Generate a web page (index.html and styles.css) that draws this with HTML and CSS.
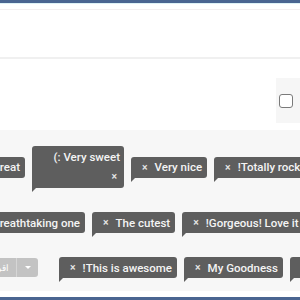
FILE: index.html
```html
<!DOCTYPE html>
<html lang="ar">
<head>
  <meta charset="UTF-8" />
  <meta name="viewport" content="width=device-width, initial-scale=1" />
  <title>Tags</title>
  <link rel="stylesheet" href="styles.css">
</head>
<body>

<div class="topbar"></div>
<div class="subbar"></div>
<div class="header"></div>

<!-- options panel -->
<div class="panel">
  <div class="check-box">
    <span class="checkbox"></span>
  </div>
</div>

<!-- tags -->
<div class="tags">
  <div class="row row-tall">
    <div class="cut" style="width: 25px">
      <span class="tag"><span class="x">×</span><span class="label" dir="rtl">Looks great</span></span>
    </div>
    <span class="tag tag-wrap"><span class="label" dir="rtl">Very sweet :)</span><span class="x">×</span></span>
    <span class="tag"><span class="x">×</span><span class="label" dir="rtl">Very nice</span></span>
    <span class="tag"><span class="x">×</span><span class="label" dir="rtl">Totally rocks!</span></span>
  </div>

  <div class="row">
    <div class="cut" style="width: 85px">
      <span class="tag"><span class="x">×</span><span class="label" dir="rtl">Breathtaking one</span></span>
    </div>
    <span class="tag"><span class="x">×</span><span class="label" dir="rtl">The cutest</span></span>
    <span class="tag"><span class="x">×</span><span class="label" dir="rtl">Gorgeous! Love it!</span></span>
  </div>

  <div class="row">
    <div class="cut cut-wide" style="width: 38px">
      <div class="btn-group">
        <span class="btn-main">اقرأ المزيد</span>
        <span class="btn-caret"></span>
      </div>
    </div>
    <span class="tag"><span class="x">×</span><span class="label" dir="rtl">This is awesome!</span></span>
    <span class="tag"><span class="x">×</span><span class="label" dir="rtl">My Goodness</span></span>
    <span class="tag"><span class="x">×</span><span class="label" dir="rtl">Wonderful</span></span>
  </div>
</div>

<div class="footer-gap"></div>
<div class="bottombar"></div>

</body>
</html>
```

FILE: styles.css
```css
* {
  margin: 0;
  padding: 0;
  box-sizing: border-box;
}

body {
  font-family: Roboto, 'Noto Sans', sans-serif;
  background: #fff;
  width: 300px;
  height: 300px;
  overflow: hidden;
}

.topbar {
  height: 4px;
  background: #4a6591;
  border-bottom: 1px solid #def2f6;
}

.subbar {
  height: 6px;
  border-bottom: 1px solid #f3eff0;
}

.header {
  height: 49px;
  border-bottom: 2px solid #f0f0f0;
}

.panel {
  height: 71px;
  display: flex;
  justify-content: flex-end;
}

.check-box {
  margin-top: 19px;
  width: 24px;
  height: 45px;
  background: #f6f6f6;
  padding: 16px 0 0 3px;
}

.checkbox {
  display: block;
  width: 14px;
  height: 14px;
  border: 1.5px solid #7a7a7a;
  border-radius: 3px;
  background: #fff;
}

/* tag list */
.tags {
  background: #f7f7f7;
  height: 161px;
  padding-top: 16px;
  display: flex;
  flex-direction: column;
  gap: 24px;
  overflow: hidden;
}

.row {
  display: flex;
  align-items: center;
  gap: 7px;
  height: 21px;
  white-space: nowrap;
}

.row-tall {
  height: 42px;
}

.cut {
  flex-shrink: 0;
  display: flex;
  justify-content: flex-end;
}

.cut-wide {
  margin-right: 14px;
}

.tag {
  position: relative;
  flex-shrink: 0;
  display: inline-flex;
  align-items: center;
  height: 21px;
  padding: 0 5px 0 11px;
  background: #5e5e5e;
  color: #f4f4f4;
  font-size: 11.5px;
  font-weight: 500;
  border-radius: 3px;
  border-bottom-left-radius: 0;
}

.tag::after {
  content: "";
  position: absolute;
  left: 0;
  top: 100%;
  border-left: 4px solid #5e5e5e;
  border-bottom: 4px solid transparent;
}

.tag .x {
  font-size: 10.5px;
  color: #e6e6e6;
  margin-right: 7px;
}

.tag-wrap {
  width: 92px;
  height: 42px;
  flex-direction: column;
  align-items: flex-end;
  justify-content: space-between;
  padding: 1px 4px 1px 0;
  line-height: 20px;
}

.tag-wrap .x {
  margin: 0 3px 0 0;
}

.btn-group {
  display: flex;
  height: 19px;
  background: #c3c3c3;
  border-radius: 3px;
  color: #fff;
  font-size: 9px;
}

.btn-main {
  display: flex;
  align-items: center;
  padding: 0 7px;
  border-right: 1px solid #d6d6d6;
}

.btn-caret {
  width: 21px;
  display: flex;
  align-items: center;
  justify-content: center;
}

.btn-caret::before {
  content: "";
  border-left: 3px solid transparent;
  border-right: 3px solid transparent;
  border-top: 3px solid #fff;
}

.footer-gap {
  height: 6px;
}

.bottombar {
  height: 10px;
  background: #4a6591;
}
```
